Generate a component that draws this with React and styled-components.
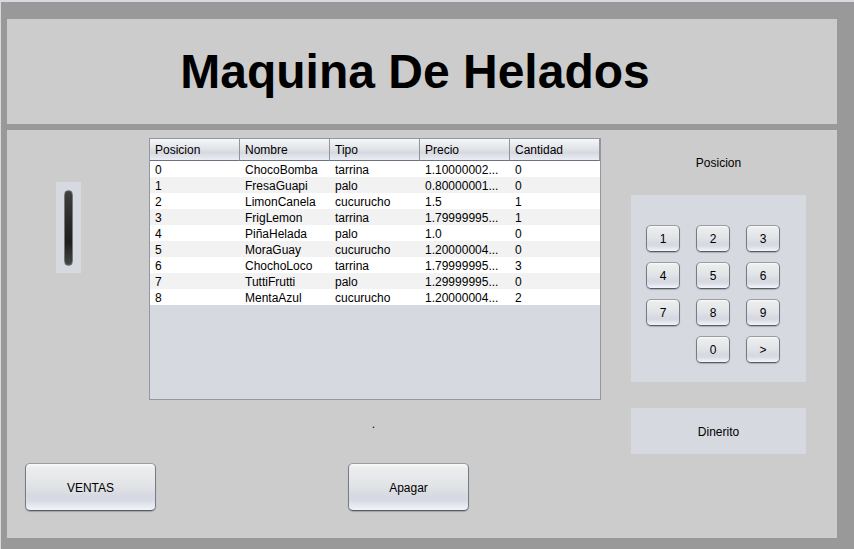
import React from "react";
import styled, { createGlobalStyle } from "styled-components";

const GlobalStyle = createGlobalStyle`
  *, *::before, *::after {
    box-sizing: border-box;
  }
  body {
    margin: 0;
    background: #d6d9df;
    color: #000;
    font-family: "Liberation Sans", Arial, sans-serif;
    font-size: 12px;
    line-height: 16px;
  }
`;

const Frame = styled.div`
  display: flex;
  min-height: 100vh;
  padding: 2px 0 0 1px;
`;

const Machine = styled.main`
  flex: 1;
  display: flex;
  flex-direction: column;
  gap: 6px;
  padding: 17px 17px 11px 6px;
  background: #999;
`;

const Header = styled.header`
  padding: 25px 14px 24px 0;
  background: #ccc;
  text-align: center;
`;

const Title = styled.h1`
  margin: 0;
  font-size: 48px;
  line-height: 56px;
  font-weight: bold;
`;

const Body = styled.section`
  flex: 1;
  display: flex;
  flex-direction: column;
  gap: 9px;
  padding: 8px 31px 27px 0;
  background: #ccc;
`;

const Columns = styled.div`
  display: grid;
  grid-template-columns: 142px 1fr 175px;
`;

const Tray = styled.div`
  align-self: start;
  display: flex;
  justify-content: center;
  width: 25px;
  height: 91px;
  margin: 44px 0 0 49px;
  padding: 8px 0 7px;
  background: #d6d9df;
`;

const Slot = styled.div`
  width: 9px;
  border: 1px solid #74767a;
  border-radius: 5px;
  background: linear-gradient(#404040, #2b2b2b 40%, #1f1f1f 70%, #484848);
`;

const Center = styled.div`
  display: flex;
  flex-direction: column;
  gap: 16px;
  margin-right: 30px;
`;

const TablePane = styled.div`
  height: 262px;
  border: 1px solid #9297a1;
  background: #d6d9df;
`;

const Table = styled.table`
  width: 100%;
  table-layout: fixed;
  border-collapse: separate;
  border-spacing: 0;
`;

const HeadCell = styled.th`
  height: 22px;
  padding: 0 5px;
  border-right: 1px solid #8f949d;
  border-bottom: 1px solid #6d737e;
  background: linear-gradient(#f5f6f8, #e2e4e9 45%, #d6d9e0 65%, #eaedf4);
  font-weight: normal;
  text-align: left;
`;

const Row = styled.tr`
  background: #fff;
  &:nth-child(even) {
    background: #f2f2f2;
  }
`;

const Cell = styled.td`
  height: 16px;
  padding: 2px 0 0 5px;
  line-height: 14px;
  white-space: nowrap;
`;

const Message = styled.output`
  text-align: center;
  padding-right: 3px;
`;

const Side = styled.aside`
  display: flex;
  flex-direction: column;
  padding-top: 17px;
`;

const SideLabel = styled.div`
  margin-bottom: 24px;
  text-align: center;
`;

const Keypad = styled.div`
  display: grid;
  grid-template-columns: repeat(3, 34px);
  grid-auto-rows: 27px;
  gap: 10px 16px;
  margin-bottom: 26px;
  padding: 30px 15px 19px;
  background: #d6d9df;
`;

const Button = styled.button`
  padding: 0;
  border: 1px solid;
  border-color: #999ca1 #777c84 #565b64 #777c84;
  border-radius: 5px;
  background: linear-gradient(#fbfbfc, #eceded 8%, #e1e3e7 48%, #d6d9e1 70%, #d8dbe4 80%, #f2f5fb);
  box-shadow: 0 1px 1px rgba(0, 0, 0, 0.2);
  color: #000;
  font: inherit;
`;

const Key = styled(Button)`
  ${({ $first }) => ($first ? "grid-column-start: 2;" : "")}
`;

const MoneyButton = styled.button`
  height: 46px;
  padding: 2px 0 0;
  border: 0;
  background: #d6d9df;
  color: #000;
  font: inherit;
`;

const Actions = styled.div`
  display: flex;
  gap: 192px;
  padding-left: 18px;
`;

const ActionButton = styled(Button)`
  width: ${({ $wide }) => ($wide ? "131px" : "121px")};
  height: 48px;
  padding-top: 2px;
`;

const columns = ["Posicion", "Nombre", "Tipo", "Precio", "Cantidad"];

const products = [
  ["0", "ChocoBomba", "tarrina", "1.10000002...", "0"],
  ["1", "FresaGuapi", "palo", "0.80000001...", "0"],
  ["2", "LimonCanela", "cucurucho", "1.5", "1"],
  ["3", "FrigLemon", "tarrina", "1.79999995...", "1"],
  ["4", "PiñaHelada", "palo", "1.0", "0"],
  ["5", "MoraGuay", "cucurucho", "1.20000004...", "0"],
  ["6", "ChochoLoco", "tarrina", "1.79999995...", "3"],
  ["7", "TuttiFrutti", "palo", "1.29999995...", "0"],
  ["8", "MentaAzul", "cucurucho", "1.20000004...", "2"],
];

const keys = ["1", "2", "3", "4", "5", "6", "7", "8", "9", "0", ">"];

export default function App() {
  return (
    <>
      <GlobalStyle />
      <Frame>
        <Machine>
          <Header>
            <Title>Maquina De Helados</Title>
          </Header>
          <Body>
            <Columns>
              <Tray>
                <Slot />
              </Tray>
              <Center>
                <TablePane>
                  <Table>
                    <thead>
                      <tr>
                        {columns.map((name) => (
                          <HeadCell key={name} scope="col">{name}</HeadCell>
                        ))}
                      </tr>
                    </thead>
                    <tbody>
                      {products.map((product) => (
                        <Row key={product[0]}>
                          {product.map((value, i) => (
                            <Cell key={columns[i]}>{value}</Cell>
                          ))}
                        </Row>
                      ))}
                    </tbody>
                  </Table>
                </TablePane>
                <Message>.</Message>
              </Center>
              <Side>
                <SideLabel id="position-label">Posicion</SideLabel>
                <Keypad role="group" aria-labelledby="position-label">
                  {keys.map((key) => (
                    <Key key={key} type="button" $first={key === "0"}>{key}</Key>
                  ))}
                </Keypad>
                <MoneyButton type="button">Dinerito</MoneyButton>
              </Side>
            </Columns>
            <Actions>
              <ActionButton type="button" $wide>VENTAS</ActionButton>
              <ActionButton type="button">Apagar</ActionButton>
            </Actions>
          </Body>
        </Machine>
      </Frame>
    </>
  );
}
